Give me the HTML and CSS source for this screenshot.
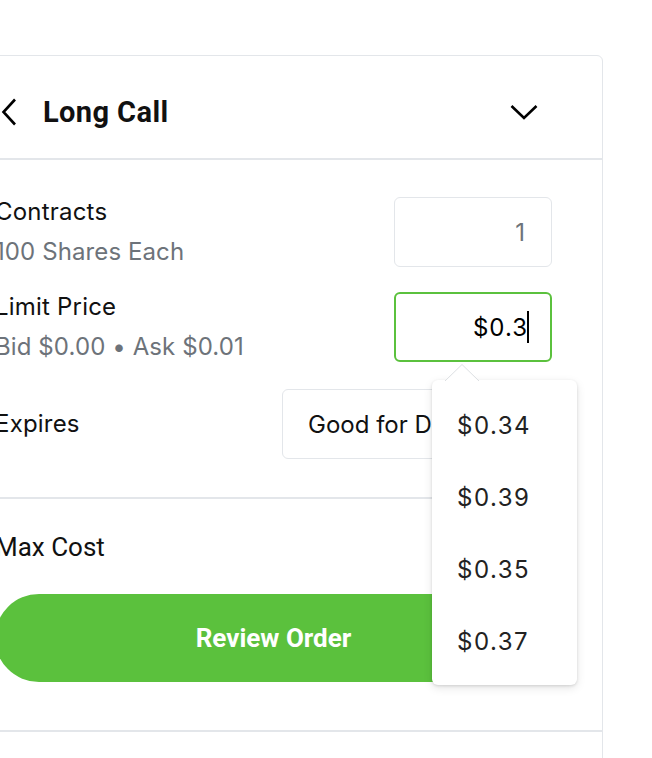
FILE: index.html
```html
<!DOCTYPE html>
<html lang="en">
<head>
  <meta charset="UTF-8" />
  <meta name="viewport" content="width=device-width, initial-scale=1" />
  <title>Long Call - Order</title>
  <link rel="stylesheet" href="styles.css">
</head>
<body>
  <div class="page">
    <div class="card">
      <div class="card-header">
        <button class="icon-btn back" aria-label="Back">
          <svg width="16" height="28" viewBox="0 0 16 28"><path d="M14 1.5 L2.5 14 L14 26.5" fill="none" stroke="#000" stroke-width="2.6"/></svg>
        </button>
        <h1>Long Call</h1>
        <button class="icon-btn toggle" aria-label="Collapse">
          <svg width="28" height="16" viewBox="0 0 28 16"><path d="M1.5 2 L14 14 L26.5 2" fill="none" stroke="#000" stroke-width="2.6"/></svg>
        </button>
      </div>

      <div class="card-body">
        <div class="row">
          <div class="label">
            <div class="title">Contracts</div>
            <div class="sub">100 Shares Each</div>
          </div>
          <div class="field muted">1</div>
        </div>

        <div class="row">
          <div class="label">
            <div class="title">Limit Price</div>
            <div class="sub">Bid $0.00 • Ask $0.01</div>
          </div>
          <div class="field focused">
            <span>$0.3</span><span class="caret"></span>
            <div class="suggest">
              <svg class="pointer" width="34" height="17" viewBox="0 0 34 17"><path d="M0 17 L17 0.5 L34 17" fill="#fff" stroke="#dcdfe2" stroke-width="1"/></svg>
              <div class="suggest-item">$0.34</div>
              <div class="suggest-item">$0.39</div>
              <div class="suggest-item">$0.35</div>
              <div class="suggest-item">$0.37</div>
            </div>
          </div>
        </div>

        <div class="row expires">
          <div class="title">Expires</div>
          <div class="select">Good for Day</div>
        </div>
      </div>

      <div class="card-summary">
        <div class="max-cost">Max Cost</div>
        <button class="btn-review">Review Order</button>
      </div>

      <div class="card-footer"></div>
    </div>
  </div>
</body>
</html>
```

FILE: styles.css
```css
:root {
  --border: #e3e6ea;
  --green: #5bc13d;
  --text: #111;
  --muted: #6d737a;
}
* {
  box-sizing: border-box;
}
body {
  margin: 0;
  background: #fff;
  color: var(--text);
  font-family: Inter, 'Noto Sans', sans-serif;
  overflow: hidden;
  height: 758px;
}
.page {
  padding-top: 55px;
}
.card {
  margin-left: -56px;
  width: 659px;
  border: 1px solid var(--border);
  border-radius: 6px;
  background: #fff;
}
.card-header {
  display: flex;
  align-items: center;
  height: 104px;
  padding: 9px 64px 0 56px;
  border-bottom: 2px solid var(--border);
}
.icon-btn {
  background: none;
  border: none;
  padding: 0;
  display: flex;
  cursor: pointer;
}
.card-header h1 {
  margin: 0 0 0 26px;
  font-family: Roboto, sans-serif;
  font-weight: 700;
  font-size: 29px;
  letter-spacing: 0.4px;
  flex: 1;
}
.card-body {
  margin: 0 50px 0 50px;
  padding: 37px 0 38px;
  border-bottom: 2px solid var(--border);
  display: flex;
  flex-direction: column;
  gap: 25px;
}
.row {
  display: flex;
  justify-content: space-between;
  align-items: center;
}
.row.expires {
  margin-top: 2px;
}
.title {
  font-size: 24px;
  line-height: 30px;
  letter-spacing: 0.2px;
}
.sub {
  font-size: 24px;
  line-height: 30px;
  margin-top: 10px;
  color: var(--muted);
  letter-spacing: 0.1px;
}
.field {
  position: relative;
  width: 158px;
  height: 70px;
  border: 1px solid var(--border);
  border-radius: 6px;
  display: flex;
  align-items: center;
  justify-content: flex-end;
  padding-right: 25px;
  font-size: 24px;
  letter-spacing: 1px;
}
.field.muted {
  color: var(--muted);
}
.field.focused {
  border: 2px solid var(--green);
  padding-right: 21px;
  color: #000;
}
.caret {
  width: 2px;
  height: 32px;
  background: #000;
  margin-left: -1px;
}
.suggest {
  position: absolute;
  left: 36px;
  top: 86px;
  width: 145px;
  padding: 9px 0 8px;
  background: #fff;
  border-radius: 6px;
  box-shadow: 0 1px 3px rgba(0,0,0,0.12), 0 3px 10px rgba(0,0,0,0.1);
  letter-spacing: 0;
  z-index: 5;
}
.pointer {
  position: absolute;
  left: 13px;
  top: -16px;
}
.suggest-item {
  height: 72px;
  display: flex;
  align-items: center;
  padding-left: 25px;
  font-size: 24px;
  letter-spacing: 1.5px;
  color: #222;
}
.select {
  width: 270px;
  height: 70px;
  border: 1px solid var(--border);
  border-radius: 6px;
  display: flex;
  align-items: center;
  padding-left: 25px;
  font-size: 24px;
}
.card-summary {
  padding: 33px 50px 48px;
  border-bottom: 2px solid var(--border);
}
.max-cost {
  font-family: Roboto, sans-serif;
  font-size: 26px;
  line-height: 30px;
}
.btn-review {
  margin-top: 32px;
  width: 100%;
  height: 88px;
  border: none;
  border-radius: 44px;
  background: var(--green);
  color: #fff;
  font-family: Roboto, sans-serif;
  font-weight: 700;
  font-size: 26px;
  cursor: pointer;
}
.card-footer {
  height: 60px;
}
```
